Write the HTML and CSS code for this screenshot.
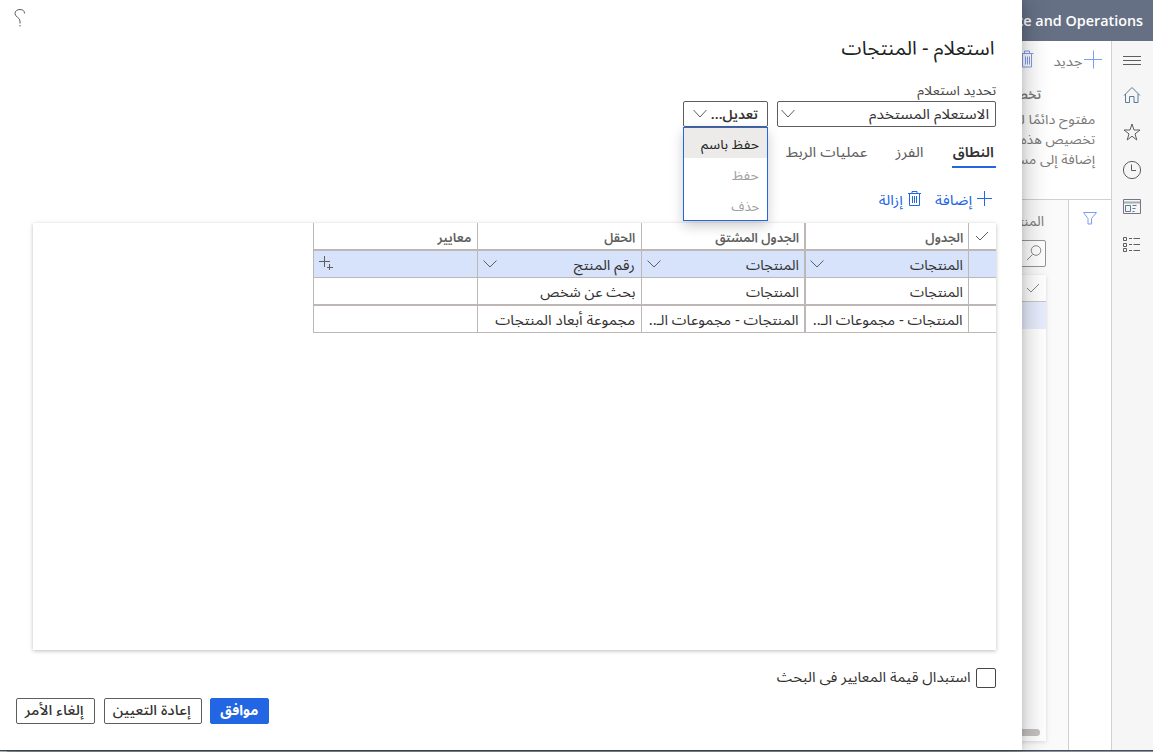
FILE: index.html
```html
<!DOCTYPE html>
<html lang="ar" dir="rtl">
<head>
<meta charset="utf-8">
<title>استعلام - المنتجات</title>
<link rel="stylesheet" href="styles.css">
</head>
<body>
<div class="app">
  <header class="topbar"><span class="t brand" dir="ltr" data-w="165">Finance and Operations</span></header>
  <div class="shell">
    <nav class="rail">
      <svg width="20" height="38" viewBox="0 0 20 38"><path d="M1 15.500h18M1 19.500h18M1 23.500h18"/></svg>
      <svg width="20" height="37" viewBox="0 0 20 37"><path stroke="#5d7a94" d="M2 16.500 10 8.500l8 8M3.500 15v8.500h4v-6h4.500v6h4V15"/></svg>
      <svg width="20" height="37" viewBox="0 0 20 37"><path d="M10 8l2 6h6l-5 3.900 1.800 6.100-4.800-3.800-4.800 3.800 1.800-6.100-5-3.900H8z"/></svg>
      <svg width="20" height="37" viewBox="0 0 20 37"><circle cx="10" cy="17" r="8.600"/><path d="M9.500 11.500v6h4.500"/></svg>
      <svg width="20" height="37" viewBox="0 0 20 37"><path d="M1.500 9.500h17v14h-17z" stroke="#7e7187"/><path d="M2 12.500h16" stroke="#a0b0b2" stroke-width="2"/><path stroke="#5d7a94" d="M3.500 15.500h5v6h-5zM10.500 15.500h4M10.500 18.500h3M10.500 21.500h2"/></svg>
      <svg width="20" height="38" viewBox="0 0 20 38"><path d="M1.500 10.500h3v3h-3zM1.500 16.500h3v3h-3zM1.500 21.500h3v3h-3z"/><path d="M7 11.500h3M11.500 11.500H18M7 17.500h3M11.500 17.500H18M7 23.500h3M11.500 23.500H18"/></svg>
    </nav>
    <main class="page">
      <section class="actions">
        <div class="toolbar">
          <svg class="blue" width="19" height="19" viewBox="0 0 19 19"><path d="M10.500 0.500v18M1 9.500h18"/></svg>
          <span class="t new" data-w="29">جديد</span>
          <svg class="blue bin" width="14" height="18" viewBox="0 0 14 18"><path d="M.5 3.500h13M4.500 3V1h5v2M2.500 4v13h9V4M5.500 6.500v8M7.500 6.500v8M9.500 6.500v8"/></svg>
        </div>
        <div class="notes">
          <p class="notes-title">تخصيص</p>
          <p><span class="t" data-w="93">مفتوح دائمًا لهذا</span></p>
          <p><span class="t" data-w="120">تخصيص هذه الصفحة</span></p>
          <p><span class="t" data-w="98">إضافة إلى مساحة</span></p>
        </div>
      </section>
      <div class="workspace">
        <aside class="filter"><svg width="16" height="15" viewBox="0 0 16 15"><path d="M1.500 1.500h13L9.500 7.500v5.500h-3.500V7.500z"/></svg></aside>
        <section class="list">
          <h2>المنتجات</h2>
          <div class="search"><svg width="16" height="18" viewBox="0 0 16 18"><circle cx="10" cy="5.500" r="4.800"/><path d="M6.500 9.500 1 15"/></svg></div>
          <div class="records">
            <div class="records-head"><svg width="14" height="10" viewBox="0 0 14 10"><path d="M1 5l4 4 8-8"/></svg></div>
            <div class="records-row"></div>
            <div class="scroll"></div>
          </div>
        </section>
      </div>
    </main>
  </div>
  <div class="edge"><i></i></div>

  <div class="dialog">
    <svg class="help" width="12" height="20" viewBox="0 0 12 20"><path d="M10.500 5.500C10.500 2.500 8.500 1.500 6 1.500 3 1.500 1 3 1 5.500 1 9 6 9.500 6 13v2.500M6 17v1.500"/></svg>
    <h1><span class="t" data-w="153">استعلام - المنتجات</span></h1>
    <div class="label"><span class="t" data-w="79">تحديد استعلام</span></div>
    <div class="query">
      <div class="select"><span class="t" data-w="120">الاستعلام المستخدم</span><svg class="chev" width="14" height="9" viewBox="0 0 14 9"><path d="M.5 1l6.500 7 6.500-7"/></svg></div>
      <div class="modify">
        <div class="modify-btn"><span class="t" data-w="47">تعديل...</span><svg class="chev" width="14" height="9" viewBox="0 0 14 9"><path d="M.5 1l6.500 7 6.500-7"/></svg></div>
        <div class="menu">
          <div class="item active"><span class="t" data-w="58">حفظ باسم</span></div>
          <div class="item"><span class="t" data-w="27">حفظ</span></div>
          <div class="item"><span class="t" data-w="28">حذف</span></div>
        </div>
      </div>
    </div>
    <div class="tabs">
      <div class="tab current"><span class="t" data-w="41">النطاق</span></div>
      <div class="tab"><span class="t" data-w="28">الفرز</span></div>
      <div class="tab"><span class="t" data-w="82">عمليات الربط</span></div>
    </div>
    <div class="commands">
      <svg class="blue" width="15" height="15" viewBox="0 0 15 15"><path d="M7.500 0v15M0 7.500h15"/></svg>
      <span class="t add" data-w="37">إضافة</span>
      <svg class="blue bin" width="13" height="16" viewBox="0 0 13 16"><path d="M0 2.500h13M4 2V.5h5V2M1.500 3v11.500h10V3M4.500 5v7M6.500 5v7M8.500 5v7"/></svg>
      <span class="t" data-w="24">إزالة</span>
    </div>
    <div class="gridbox">
      <div class="row head">
        <div><svg width="14" height="10" viewBox="0 0 14 10"><path d="M1 5l4 4 8-8"/></svg></div>
        <div><span class="t" data-w="38">الجدول</span></div><div><span class="t" data-w="84">الجدول المشتق</span></div><div><span class="t" data-w="31">الحقل</span></div><div><span class="t" data-w="34">معايير</span></div>
      </div>
      <div class="row selected">
        <div></div>
        <div><span class="t" data-w="53">المنتجات</span><svg class="chev" width="14" height="8" viewBox="0 0 14 8"><path d="M.5.5l6.500 6.500 6.500-6.500"/></svg></div>
        <div><span class="t" data-w="53">المنتجات</span><svg class="chev" width="14" height="8" viewBox="0 0 14 8"><path d="M.5.5l6.500 6.500 6.500-6.500"/></svg></div>
        <div><span class="t" data-w="61">رقم المنتج</span><svg class="chev" width="14" height="8" viewBox="0 0 14 8"><path d="M.5.5l6.500 6.500 6.500-6.500"/></svg></div>
        <div><svg class="chev plus" width="15" height="14" viewBox="0 0 15 14"><path d="M5.500 0v11M0 5.500h11M10.500 8v6M8 11.500h6"/></svg></div>
      </div>
      <div class="row thick">
        <div></div><div><span class="t" data-w="53">المنتجات</span></div><div><span class="t" data-w="53">المنتجات</span></div><div><span class="t" data-w="95">بحث عن شخص</span></div><div></div>
      </div>
      <div class="row">
        <div></div><div><span class="t" data-w="150">المنتجات - مجموعات الـ..</span></div><div><span class="t" data-w="150">المنتجات - مجموعات الـ..</span></div><div><span class="t" data-w="140">مجموعة أبعاد المنتجات</span></div><div></div>
      </div>
    </div>
    <div class="override"><span class="box"></span><span class="t" data-w="194">استبدال قيمة المعايير فى البحث</span></div>
    <div class="buttons">
      <button class="ok"><span class="t" data-w="38">موافق</span></button>
      <button class="reset"><span class="t" data-w="78">إعادة التعيين</span></button>
      <button class="cancel"><span class="t" data-w="59">إلغاء الأمر</span></button>
    </div>
  </div>
</div>
<script src="fit.js"></script>
</body>
</html>
```
FILE: styles.css
```css
* { box-sizing: border-box; }
html, body { margin: 0; background: #fff; overflow: hidden; }
body { direction: ltr; width: 1156px; height: 752px; font: 14px/20px "Noto Sans Arabic", "Segoe UI", "Open Sans", "DejaVu Sans", sans-serif; color: #323130; }
svg { display: block; flex: none; fill: none; stroke: #605e5c; stroke-width: 1; }
h1, h2, p { margin: 0; font-weight: 400; }
.t { display: block; flex: none; white-space: nowrap; direction: rtl; }
.t > span { display: inline-block; transform-origin: right center; }
.app { position: relative; direction: rtl; width: 1153px; height: 752px; display: flex; flex-direction: column; overflow: hidden; }
.topbar { height: 41px; flex: none; display: flex; align-items: center; padding: 0 10px 0 0; background: #667085; color: #fff; }
.brand { font: 600 14px/20px "Open Sans", sans-serif; }
.shell { flex: 1; display: flex; min-height: 0; }
.rail { width: 42px; flex: none; border-left: 1px solid #d2d0ce; background: #f6f6f7; display: flex; flex-direction: column; align-items: center; padding-right: 2px; }
.page { flex: 1; display: flex; flex-direction: column; }
.actions { height: 159px; border-bottom: 1px solid #d2d0ce; background: #fff; color: #7b7978; font-size: 13px; padding: 9px 9px 0 0; }
.toolbar { display: flex; align-items: flex-start; height: 35px; }
.new { margin: 2px 1px 0 19px; }
.actions .blue, .filter svg { stroke: #809df0; }
.notes { padding-right: 7px; }
.notes p { height: 20px; white-space: nowrap; }
.notes .notes-title { height: 25px; padding-right: 54px; font-weight: 600; }
.workspace { flex: 1; display: flex; }
.filter { width: 43px; border-left: 1px solid #d2d0ce; background: #fff; padding: 11px 13px 0 0; }
.list { flex: 1; background: #fafafa; padding: 11px 22px 0 0; color: #7b7978; }
.list h2 { font-size: 14px; line-height: 22px; height: 29px; padding-right: 2px; }
.search { height: 27px; border: 1px solid #979593; border-radius: 2px; padding: 4px 3px 0 0; margin-bottom: 8px; background: #fff; }
.search svg, .records svg { stroke: #888; }
.records { height: 466px; display: flex; flex-direction: column; background: #fff; box-shadow: 0 1px 4px #0002; }
.records-head { height: 27px; border-bottom: 1px solid #c8c6c4; padding: 8px 6px 0 0; }
.records-row { height: 27px; background: #e7edfd; }
.scroll { height: 7px; margin: auto 6px 5px 0; border-radius: 4px; background: #c3c2c1; }
.edge { height: 2px; flex: none; background: #8992a0; border-top: 1px solid #484e58; }
.edge i { display: block; width: 7px; height: 1px; margin-right: auto; background: #b8bec8; }
.dialog { position: absolute; left: 0; top: 0; width: 1022px; height: 750px; background: #fff; box-shadow: 0 0 26px rgba(0,0,0,.30), 0 0 6px rgba(0,0,0,.10); padding: 8px 26px 0 16px; }
.help { margin-right: auto; margin-left: -2px; }
.dialog h1 { height: 50px; line-height: 28px; font-size: 19px; color: #201f1e; padding: 7px 1px 0 0; }
.label { height: 20px; line-height: 20px; margin-top: 3px; font-size: 13px; color: #484644; }
.dialog h1, .label { display: flex; }
.query { display: flex; gap: 9px; }
.select, .modify-btn { height: 26px; border: 1px solid #605e5c; border-radius: 2px; display: flex; align-items: center; padding-top: 1px; }
.select { width: 219px; padding-right: 6px; padding-left: 3px; justify-content: space-between; }
.modify { width: 85px; position: relative; }
.modify-btn { padding-right: 9px; padding-left: 8px; justify-content: space-between; font-weight: 600; font-size: 13px; }
.modify-btn .chev { margin-left: 1px; }
.query .chev { margin-bottom: 3px; }
.menu { position: absolute; z-index: 2; top: 26px; left: 0; width: 85px; height: 94px; border: 1px solid #2266e3; background: #fff; box-shadow: 0 5px 12px #0003; color: #a19f9d; font-size: 13px; }
.item { height: 31px; display: flex; align-items: center; padding: 4px 8px 0 0; }
.item.active { height: 30px; background: #edebe9; color: #201f1e; }
.tabs { display: flex; gap: 28px; margin-top: 15px; height: 26px; color: #605e5c; }
.tab { height: 26px; padding-top: 1px; }
.tab.current { width: 44px; padding-right: 2px; border-bottom: 2px solid #2266e3; color: #323130; font-weight: 600; }
.commands { display: flex; align-items: flex-start; color: #2266e3; padding: 23px 4px 0 0; height: 55px; }
.commands svg { stroke: #2266e3; }
.commands .t { margin-right: 5px; }
.commands .add { margin-left: 14px; }
.gridbox { width: 963px; height: 427px; box-shadow: 0 1px 4px #0004; background: #fff; }
.row { display: grid; grid-template-columns: 28px 164px 163px 164px 164px; height: 27px; width: 683px; border-bottom: 1px solid #bdb8b5; }
.row > div { border-left: 1px solid #bdb8b5; display: flex; align-items: center; justify-content: space-between; padding: 4px 5px 0 5px; }
.row > div:nth-child(2) { border-left-width: 2px; padding-left: 4px; }
.row > div:nth-child(n+4) { padding-right: 6px; }
.row.head { color: #605e5c; font-weight: 600; font-size: 13px; }
.row.head, .row.thick { height: 28px; border-bottom-width: 2px; }
.row.selected { background: #d7e2fb; }
.row.head > div:first-child { padding: 0 7px; }
.chev { margin-bottom: 5px; }
.row .plus { margin-right: auto; margin-bottom: 6px; }
.override { display: flex; gap: 5px; margin-top: 18px; height: 20px; line-height: 20px; }
.box { width: 20px; height: 20px; border: 1px solid #484644; border-radius: 2px; }
.buttons { display: flex; justify-content: flex-end; margin-top: 10px; }
button { height: 26px; border: 1px solid #605e5c; border-radius: 2px; background: #fff; color: #323130; font: inherit; padding: 0; display: flex; align-items: center; justify-content: center; }
.ok { width: 59px; background: #2266e3; border-color: #2266e3; color: #fff; font-weight: 700; }
.reset { width: 98px; margin-right: 8px; font-weight: 500; }
.cancel { width: 79px; margin-right: 9px; font-weight: 500; }
.reset .t, .cancel .t { margin-right: -2px; }
.t.brand { direction: ltr; }
.t.brand > span { transform-origin: left center; }
```
FILE: fit.js
```js
// Scales each label horizontally so it occupies its assigned width.
document.querySelectorAll('.t').forEach(function (el) {
  var inner = document.createElement('span');
  while (el.firstChild) inner.appendChild(el.firstChild);
  el.appendChild(inner);
  var target = Number(el.dataset.w);
  var natural = inner.getBoundingClientRect().width;
  el.style.width = target + 'px';
  inner.style.transform = 'scaleX(' + target / natural + ')';
  inner.style.marginLeft = el.dir === 'ltr' ? '0' : Math.min(0, target - natural) + 'px';
});
```
